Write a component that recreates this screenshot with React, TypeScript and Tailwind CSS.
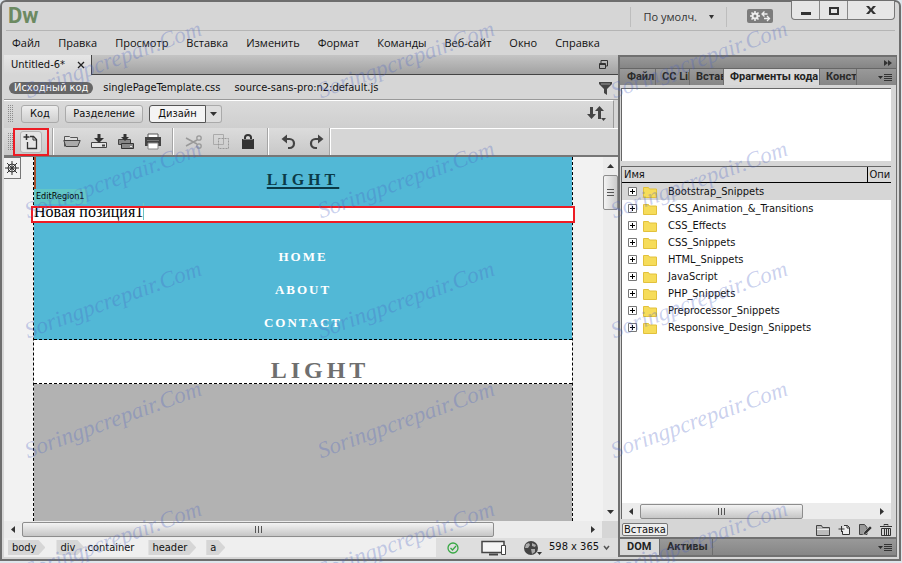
import type { ReactNode } from "react";
import clsx from "clsx";

const menuItems = ["Файл", "Правка", "Просмотр", "Вставка", "Изменить", "Формат", "Команды", "Веб-сайт", "Окно", "Справка"];

const snippets = [
  "Bootstrap_Snippets",
  "CSS_Animation_&_Transitions",
  "CSS_Effects",
  "CSS_Snippets",
  "HTML_Snippets",
  "JavaScript",
  "PHP_Snippets",
  "Preprocessor_Snippets",
  "Responsive_Design_Snippets",
];

function Icon(props: { w?: number; h?: number; className?: string; children: ReactNode }) {
  const { w = 18, h = 18, className, children } = props;
  return (
    <svg aria-hidden="true" width={w} height={h} viewBox={`0 0 ${w} ${h}`} fill="none" className={clsx("shrink-0", className)}>
      {children}
    </svg>
  );
}

function Arrow(props: { dir: "up" | "down" | "left" | "right" }) {
  const paths = { up: "M0 5L3.5 1L7 5z", down: "M0 2L3.5 6L7 2z", left: "M5 0L1 3.5L5 7z", right: "M2 0L6 3.5L2 7z" };
  return (
    <Icon w={7} h={7}>
      <path d={paths[props.dir]} fill="#333" />
    </Icon>
  );
}

function PanelMenuIcon() {
  return (
    <Icon w={14} h={9}>
      <path d="M0 3h5L2.500 6z" fill="#2b2b2b" />
      <path d="M6 1.500h8M6 3.500h8M6 5.500h8M6 7.500h8" stroke="#333" />
    </Icon>
  );
}

function Grip() {
  return (
    <Icon w={5} h={18}>
      <path d="M.5 0v18M2.500 0v18M4.500 0v18" stroke="#8c8c8c" strokeDasharray="1 1" />
    </Icon>
  );
}

function Divider() {
  return <div className="h-full w-0.5 border-l border-[#a5a5a5] bg-white" />;
}

function TitleBar() {
  return (
    <header className="ml-1 mr-1 flex h-7 items-start border-b border-[#b5b5b5]">
      <div className="flex-1 pt-px pl-0.5 font-['Liberation_Sans_Narrow','Roboto',sans-serif] text-[22px] leading-6 font-bold text-[#6c8a62]">Dw</div>
      <div className="mt-1 mr-5 flex h-5 items-center border-x border-[#bdbdbd] px-3">
        <button type="button" className="flex items-center gap-3 text-[#333]">
          По умолч.
          <Icon w={5} h={4}>
            <path d="M0 0h5L2.500 4z" fill="#333" />
          </Icon>
        </button>
      </div>
      <button type="button" aria-label="Синхронизация" className="mt-1.5 mr-[18px] flex h-3.5 w-[26px] items-center justify-center rounded-xs bg-[#7c7c7c]">
        <Icon w={22} h={12}>
          <circle cx="6" cy="6" r="2.500" stroke="#eee" strokeWidth="2" />
          <path d="M6 1v2M6 9v2M1 6h2M9 6h2M2.500 2.500l1.400 1.400M8.100 8.100l1.400 1.400M9.500 2.500L8.100 3.900M3.900 8.100L2.500 9.500" stroke="#eee" strokeWidth="1.500" />
          <path d="M18.500 4h-5M15.500 1.500L13 4l2.500 2.500M15 8.500h5M18 6l2.500 2.500L18 11" stroke="#eee" strokeWidth="1.300" />
        </Icon>
      </button>
      <div className="-mt-0.5 flex h-[19px] overflow-hidden rounded-b border border-t-0 border-[#777] bg-[#e6e6e6]">
        <button type="button" aria-label="Свернуть" className="flex w-7 items-center justify-center border-r border-[#888]">
          <Icon w={12} h={12}>
            <path d="M1 8h10v3H1z" fill="#333" />
          </Icon>
        </button>
        <button type="button" aria-label="Развернуть" className="flex w-7 items-center justify-center border-r border-[#888]">
          <Icon w={12} h={12}>
            <path d="M2 4h8v6H2z" stroke="#333" strokeWidth="2" />
          </Icon>
        </button>
        <button type="button" aria-label="Закрыть" className="flex w-[46px] items-center justify-center">
          <Icon w={12} h={12}>
            <path d="M1 2h3l2 2.500L8 2h3L7.500 6 11 10H8L6 7.500 4 10H1l3.500-4z" fill="#333" />
          </Icon>
        </button>
      </div>
    </header>
  );
}

function MenuBar() {
  return (
    <nav className="flex h-6 items-center gap-[18px] pl-2.5">
      {menuItems.map((item) => (
        <button type="button" key={item}>
          {item}
        </button>
      ))}
    </nav>
  );
}

function DocumentTabs() {
  return (
    <div className="flex h-5 shrink-0 border-b border-[#444] bg-linear-to-b from-[#c4c4c4] to-[#a2a2a2]">
      <div className="-mb-px flex items-center gap-3 border-r border-[#444] bg-linear-to-b from-[#e6e6e6] to-[#d6d6d6] pr-1.5 pl-[7px]">
        <span>Untitled-6*</span>
        <button type="button" aria-label="Закрыть вкладку">
          <Icon w={8} h={8}>
            <path d="M1 1l6 6M7 1L1 7" stroke="#222" strokeWidth="1.300" />
          </Icon>
        </button>
      </div>
      <button type="button" aria-label="Восстановить" className="mr-2.5 ml-auto">
        <Icon w={9} h={9}>
          <path d="M2 3V.5h6.500V6H7" stroke="#333" />
          <path d="M.5 3.500h6v5h-6zM0 4.500h7" stroke="#333" />
        </Icon>
      </button>
    </div>
  );
}

function RelatedFiles() {
  return (
    <div className="flex h-[25px] shrink-0 items-center gap-3.5 border-b border-[#999] pt-0.5 pr-1.5 pl-[5px]">
      <button type="button" className="-mr-1 h-3 rounded-full bg-[#666] px-[5px] leading-3 text-white">
        Исходный код
      </button>
      <button type="button">singlePageTemplate.css</button>
      <button type="button">source-sans-pro:n2:default.js</button>
      <button type="button" aria-label="Фильтр" className="ml-auto">
        <Icon w={13} h={13}>
          <path d="M0 0h13v2L8 7v6L5 11V7L0 2z" fill="#444" />
          <path d="M2 2h9" stroke="#999" />
        </Icon>
      </button>
    </div>
  );
}

function ViewBar() {
  const button = "h-[18px] rounded-[3px] border border-[#aaa] bg-linear-to-b from-[#eee] to-[#cfcfcf]";
  return (
    <div className="mr-1 flex h-7 shrink-0 items-center gap-1.5 border-t border-r border-t-white border-r-[#999] bg-linear-to-b from-[#dadada] to-[#cfcfcf] px-1 pb-0.5 leading-4">
      <Grip />
      <button type="button" className={clsx(button, "ml-0.5 w-[38px]")}>
        Код
      </button>
      <button type="button" className={clsx(button, "w-[78px]")}>
        Разделение
      </button>
      <div className="flex">
        <button type="button" className="h-[18px] w-[57px] rounded-l-[3px] border border-[#555] bg-[#f4f4f4]">
          Дизайн
        </button>
        <button type="button" aria-label="Режим" className="flex h-[18px] w-4 items-center justify-center rounded-r-[3px] border border-l-0 border-[#aaa] bg-[#ddd]">
          <Arrow dir="down" />
        </button>
      </div>
      <button type="button" aria-label="Управление файлами" className="mr-0.5 ml-auto">
        <Icon w={20} h={15}>
          <path d="M4.500 1v9M12.500 4v9" stroke="#444" strokeWidth="3" />
          <path d="M0 8h9l-4.500 5zM8 5h9L12.500 0z" fill="#444" />
          <path d="M14 12h5l-2.500 3z" fill="#444" />
        </Icon>
      </button>
    </div>
  );
}

function ToolButton(props: { label: string; children: ReactNode }) {
  return (
    <button type="button" aria-label={props.label} className="flex h-full w-[27px] items-center justify-center">
      <Icon>{props.children}</Icon>
    </button>
  );
}

function StandardBar() {
  return (
    <div className="flex h-[29px] shrink-0 items-center border-b-2 border-[#777] bg-linear-to-b from-[#dcdcdc] to-[#c8c8c8] pl-1">
      <Grip />
      <button
        type="button"
        aria-label="Создать"
        className="relative mr-[5px] ml-[7px] flex h-[22px] w-[22px] items-center justify-center rounded-[3px] border border-[#b5b5b5] bg-[#e6e6e6] after:absolute after:-inset-x-2 after:-inset-y-1 after:border-2 after:border-[#ed1c24]"
      >
        <Icon>
          <path d="M5.500 9v6.500h9v-9l-3-3H8" stroke="#333" strokeWidth="1.300" />
          <path d="M11 3.500v3.500h3.500" stroke="#333" />
          <path d="M4.500 1v6M1.500 4h6" stroke="#333" strokeWidth="1.500" />
        </Icon>
      </button>
      <div className="ml-[5px] h-full">
        <Divider />
      </div>
      <div className="flex h-full pr-1.5 pl-1">
        <ToolButton label="Открыть">
          <path d="M1.500 13.500v-10h5l1 1h7v3" fill="#ddd" stroke="#555" />
          <path d="M.8 7.500h16.400l-2.500 6H2.800z" stroke="#444" fill="#aaa" />
        </ToolButton>
        <ToolButton label="Сохранить">
          <path d="M1.500 9.500h15v5h-15z" fill="#e6e6e6" stroke="#444" />
          <path d="M9 1v5" stroke="#333" strokeWidth="3" />
          <path d="M4 5h10L9 10z" fill="#333" />
          <path d="M12 12.500h3" stroke="#444" strokeWidth="2" />
        </ToolButton>
        <ToolButton label="Сохранить все">
          <path d="M1.500 6.500h12v5h-12z" fill="#888" stroke="#444" />
          <path d="M4.500 10.500h12v5h-12z" fill="#888" stroke="#333" />
          <path d="M8 1v4" stroke="#333" strokeWidth="3" />
          <path d="M4 4h8L8 8z" fill="#333" />
          <path d="M13 13.500h2" stroke="#eee" />
        </ToolButton>
        <ToolButton label="Печать">
          <path d="M4 1h10v4H4z" fill="#fff" stroke="#555" />
          <path d="M1 4h16v9H1z" fill="#444" />
          <path d="M4 10h10v6H4z" fill="#fff" stroke="#888" />
          <path d="M3 7.500h12" stroke="#777" />
        </ToolButton>
      </div>
      <Divider />
      <div className="flex h-full px-1.5">
        <ToolButton label="Вырезать">
          <path d="M1 5l11 6M1 13l11-6" stroke="#999" strokeWidth="1.500" />
          <circle cx="14" cy="5" r="2.200" stroke="#999" strokeWidth="1.300" />
          <circle cx="14" cy="13" r="2.200" stroke="#999" strokeWidth="1.300" />
        </ToolButton>
        <ToolButton label="Копировать">
          <path d="M1.500 1.500h10v10h-10z" stroke="#aaa" />
          <path d="M6.500 5.500h10v10h-10z" stroke="#999" strokeDasharray="2 1" />
        </ToolButton>
        <ToolButton label="Вставить">
          <path d="M3 6h12v10H3z" fill="#333" />
          <path d="M6 6V4.500a3 2.500 0 016 0V6" stroke="#333" strokeWidth="2" />
          <path d="M4 6.500h10" stroke="#777" />
        </ToolButton>
      </div>
      <Divider />
      <div className="flex h-full pl-1.5">
        <ToolButton label="Отменить">
          <path d="M5 6h4.500a4 4 0 010 9H8" stroke="#444" strokeWidth="2.200" />
          <path d="M1.500 6L7 1.500v9z" fill="#444" />
        </ToolButton>
        <ToolButton label="Повторить">
          <path d="M13 6H8.500a4 4 0 000 9H10" stroke="#444" strokeWidth="2.200" />
          <path d="M16.500 6L11 1.500v9z" fill="#444" />
        </ToolButton>
      </div>
      <Divider />
      <div className="h-full flex-1 border-t border-white bg-[#d6d6d6]" />
    </div>
  );
}

function DesignView() {
  return (
    <div className="relative flex min-h-0 flex-1 overflow-hidden bg-[#f2f2f2]">
      {/* code navigator marker hangs over the left gutter */}
      <div className="absolute top-0 left-0 z-10 flex h-[22px] w-[17px] items-center justify-center border border-l-0 border-[#777] bg-[#f2f2f2]">
        <Icon w={16} h={16}>
          <circle cx="8" cy="8" r="4" stroke="#333" />
          <circle cx="8" cy="8" r="1.500" fill="#333" />
          <path d="M8 1v14M1 8h14M3 3l10 10M13 3L3 13" stroke="#333" />
        </Icon>
      </div>
      <main className="ml-[29px] flex flex-1 flex-col border-x border-dashed border-black text-center font-['Liberation_Serif',serif] font-bold">
        <section className="flex shrink-0 flex-col border-b border-dashed border-black bg-[#52b8d6] text-white">
          <div className="relative h-[50px] pt-[11px] text-[16px] leading-6 text-[#0b3a47]">
            <div className="absolute top-0 left-0 h-8 w-0.5 bg-[#a5502f]" />
            <a href="#light" className="tracking-[4px] underline decoration-2 underline-offset-2">
              LIGHT
            </a>
            <div className="absolute top-8 left-0 h-[15px] bg-[#61c6c6] px-0.5 font-['DejaVu_Sans_Condensed','DejaVu_Sans',sans-serif] text-[9px] leading-[15px] font-normal text-black">
              EditRegion1
            </div>
          </div>
          <div className="relative -mx-0.5 h-[15px] bg-white pl-0.5 text-left text-[16px] leading-[10px] font-normal text-black outline-2 outline-[#ed1c24] -outline-offset-1">
            <span className="border-r border-[#6ac4c4]">Новая позиция1</span>
          </div>
          <ul className="pt-[18px] text-[13px] leading-[33px] tracking-[2px]">
            <li><a href="#home">HOME</a></li>
            <li><a href="#about">ABOUT</a></li>
            <li><a href="#contact">CONTACT</a></li>
          </ul>
        </section>
        <h1 className="h-11 shrink-0 border-b border-dashed border-black bg-white pt-3.5 pl-[34px] text-[24px] leading-8 tracking-[4px] text-[#6f6f6f]">LIGHT</h1>
        <div className="flex-1 bg-[#b2b2b2]" />
      </main>
      <div className="w-[30px]" />
      <div className="flex w-[15px] flex-col items-center bg-[#ececec] py-1.5">
        <Arrow dir="up" />
        <div className="mt-[5px] flex h-[35px] w-[15px] flex-col items-center justify-center gap-0.5 rounded-xs border border-[#8d8d8d] bg-linear-to-r from-[#f3f3f3] to-[#cacaca]">
          <span className="h-px w-[7px] bg-[#555]" />
          <span className="h-px w-[7px] bg-[#555]" />
          <span className="h-px w-[7px] bg-[#555]" />
        </div>
        <div className="mt-auto">
          <Arrow dir="down" />
        </div>
      </div>
    </div>
  );
}

function HorizontalScroll(props: { thumb: string; className?: string }) {
  return (
    <div className={clsx("flex shrink-0 items-center bg-[#ececec]", props.className)}>
      <div className="flex w-[18px] justify-center">
        <Arrow dir="left" />
      </div>
      <div className={clsx("flex h-[15px] items-center justify-center gap-0.5 rounded-xs border border-[#8d8d8d] bg-linear-to-b from-[#f3f3f3] to-[#c6c6c6]", props.thumb)}>
        <span className="h-[7px] w-px bg-[#555]" />
        <span className="h-[7px] w-px bg-[#555]" />
        <span className="h-[7px] w-px bg-[#555]" />
      </div>
      <div className="mr-1.5 ml-auto">
        <Arrow dir="right" />
      </div>
    </div>
  );
}

function TagChip(props: { name: string }) {
  return (
    <button type="button" className="h-[15px] bg-[#d6d6d6] pr-[9px] pl-1 leading-[15px] [clip-path:polygon(0_0,calc(100%-7px)_0,100%_50%,calc(100%-7px)_100%,0_100%)]">
      {props.name}
    </button>
  );
}

function StatusBar() {
  return (
    <footer className="flex h-[19px] shrink-0 items-center bg-[#efefef] pl-1">
      <TagChip name="body" />
      <div className="ml-[11px] flex items-center">
        <TagChip name="div" />
        <span className="leading-[15px]">.container</span>
      </div>
      <div className="ml-3.5 flex items-center gap-2.5">
        <TagChip name="header" />
        <TagChip name="a" />
      </div>
      <div className="ml-auto flex h-full items-center bg-[#dedede] pl-[11px]">
        <Icon w={12} h={12}>
          <circle cx="6" cy="6" r="5" stroke="#39a845" strokeWidth="1.300" />
          <path d="M3.500 6l2 2L9 4" stroke="#39a845" strokeWidth="1.300" />
        </Icon>
        <Icon w={26} h={16} className="ml-[22px]">
          <path d="M1 1.500h22v11H1z" fill="#f4f4f4" stroke="#444" strokeWidth="1.500" />
          <path d="M8 14.500h9" stroke="#444" strokeWidth="2" />
          <path d="M20.500 5.500h4v9h-4z" fill="#fff" stroke="#444" />
        </Icon>
        <Icon w={20} h={16} className="ml-4">
          <circle cx="8" cy="8" r="7" fill="#444" />
          <path d="M3 4l3-1 1 2-2 3-3 0zM9 3l4 2-1 2-3-1zM8 9l4 0 0 3-3 2z" fill="#aaa" />
          <path d="M14 12h5l-2.500 3z" fill="#333" />
        </Icon>
        <button type="button" className="mr-2 ml-1.5 flex items-center gap-1">
          598 x 365
          <Icon w={7} h={7}>
            <path d="M1 2l2.500 3L6 2" stroke="#555" strokeWidth="1.500" />
          </Icon>
        </button>
      </div>
    </footer>
  );
}

function PanelTab(props: { name: string; active?: boolean; className?: string }) {
  return (
    <button
      type="button"
      className={clsx(
        "overflow-hidden border-r border-[#6d6d6d] text-left font-['Roboto',sans-serif] text-[11px] leading-4 font-bold whitespace-nowrap",
        props.active ? "bg-[#d9d9d9] text-[#222]" : "text-[#2a2a2a]",
        props.className,
      )}
    >
      {props.name}
    </button>
  );
}

function SidePanel() {
  return (
    <aside className="flex w-[279px] shrink-0 flex-col border-2 border-r border-[#707070] bg-[#d6d6d6]">
      <div className="flex h-[11px] shrink-0 items-center justify-end bg-linear-to-b from-[#989898] to-[#858585] pr-1">
        <Icon w={8} h={6}>
          <path d="M0 0l4 3-4 3zM4 0l4 3-4 3z" fill="#333" />
        </Icon>
      </div>
      <div className="flex h-[17px] shrink-0 border-t border-[#666] bg-linear-to-b from-[#999] to-[#868686]">
        <PanelTab name="Файлы" className="w-9 pl-[7px]" />
        <PanelTab name="CC Libraries" className="w-[34px] pl-1.5" />
        <PanelTab name="Вставка" className="w-[34px] pl-1.5" />
        <PanelTab name="Фрагменты кода" active className="w-24 pl-1.5" />
        <PanelTab name="Конструктор" className="w-[37px] pl-1.5" />
        <button type="button" aria-label="Меню панели" className="mr-1 ml-auto">
          <PanelMenuIcon />
        </button>
      </div>
      <div className="mt-[3px] mr-[5px] ml-px h-[73px] shrink-0 border-t border-l border-[#666] bg-white" />
      <div className="mt-[5px] mr-[5px] ml-px flex min-h-0 flex-1 flex-col border-t border-l border-[#666] bg-white">
        <div className="min-h-0 flex-1">
          <table className="w-full table-fixed border-collapse leading-[15px]">
            <thead>
              <tr className="h-[15px] border-b border-black bg-[#d9d9d9] text-left">
                <th className="border-r border-black pl-0.5 font-normal">Имя</th>
                <th className="w-6 overflow-hidden pl-0.5 font-normal">Опи</th>
              </tr>
            </thead>
            <tbody>
              {snippets.map((name, index) => (
                <tr key={name} className={clsx("h-[17px]", index === 0 && "bg-[#d6d6d6]")}>
                  <td colSpan={2} className="p-0 pl-1.5">
                    <div className="flex h-[17px] items-center">
                      <Icon w={9} h={9}>
                        <path d="M.5.5h8v8h-8z" fill="#fff" stroke="#777" />
                        <path d="M2 4.500h5M4.500 2v5" stroke="#000" />
                      </Icon>
                      <Icon w={14} h={12} className="mr-[11px] ml-1.5">
                        <path d="M.5 1.500h5l1 1.500h7v8.500H.5z" fill="#f6dc5a" stroke="#e2c13c" />
                      </Icon>
                      {name}
                    </div>
                  </td>
                </tr>
              ))}
            </tbody>
          </table>
        </div>
        <HorizontalScroll thumb="w-[163px]" className="h-4" />
      </div>
      <div className="mt-[3px] flex h-[15px] shrink-0 items-center gap-2 pr-1">
        <button type="button" className="mr-auto ml-0.5 h-[13px] rounded-xs border border-[#777] bg-[#eee] px-px leading-[11px]">
          Вставка
        </button>
        <Icon w={14} h={12}>
          <path d="M.5 11.500V1.500h5l1 2h7v8z" fill="#bbb" stroke="#444" />
          <path d="M1 5.500h12" stroke="#eee" />
        </Icon>
        <Icon w={13} h={12}>
          <path d="M4.500 7v3.500h7v-7l-2-2H6" fill="#eee" stroke="#333" />
          <path d="M9 1.500V4h2.500M3.500 2v6M.5 5h6" stroke="#333" />
        </Icon>
        <Icon w={13} h={12}>
          <path d="M.5.5h5l2.500 3v7H.5z" fill="#999" stroke="#444" />
          <path d="M4 11l1-3 6-6 2 2-6 6z" fill="#333" stroke="#ddd" strokeWidth=".5" />
        </Icon>
        <Icon w={12} h={12}>
          <path d="M0 2.500h12M4 1.500V.5h4v1" stroke="#333" />
          <path d="M1.500 4.500h9v7h-9zM4.500 5v6M6.500 5v6M8.500 5v6" stroke="#333" />
        </Icon>
      </div>
      <div className="flex h-[18px] shrink-0 border-t-2 border-[#707070] bg-linear-to-b from-[#999] to-[#868686]">
        <PanelTab name="DOM" active className="w-10 pl-[7px]" />
        <PanelTab name="Активы" className="w-[53px] pl-[7px]" />
        <button type="button" aria-label="Меню панели" className="mr-1 ml-auto">
          <PanelMenuIcon />
        </button>
      </div>
    </aside>
  );
}

function Watermark() {
  return (
    <div aria-hidden="true" className="pointer-events-none absolute inset-0 z-20 overflow-hidden">
      <div className="grid w-[1172px] auto-rows-[120px] grid-cols-[repeat(4,293px)]">
        {Array.from({ length: 20 }, (_, i) => (
          <div key={i} className="flex items-center pl-5">
            <span className="-rotate-20 font-['Liberation_Serif',serif] text-[23px] whitespace-nowrap text-[#4a62c4]/30 italic">Soringpcrepair.Com</span>
          </div>
        ))}
      </div>
    </div>
  );
}

export default function App() {
  return (
    <div className="relative flex h-screen flex-col overflow-hidden bg-[#dfe6ec] pb-0.5 font-['DejaVu_Sans_Condensed','DejaVu_Sans',sans-serif] text-[11px] text-[#111]">
      <div className="mr-px flex min-h-0 flex-1 flex-col rounded-t-md border-2 border-[#6e6e6e] bg-[#d6d6d6] pt-px pb-0.5">
        <div className="shrink-0 font-['Open_Sans',sans-serif]">
          <TitleBar />
          <MenuBar />
        </div>
        <div className="mr-0.5 ml-0.5 flex min-h-0 flex-1">
          <div className="flex min-w-0 flex-1 flex-col">
            <DocumentTabs />
            <RelatedFiles />
            <ViewBar />
            <StandardBar />
            <DesignView />
            <HorizontalScroll thumb="w-[79%]" className="mr-4 h-[17px]" />
            <StatusBar />
          </div>
          <SidePanel />
        </div>
      </div>
      <Watermark />
    </div>
  );
}
